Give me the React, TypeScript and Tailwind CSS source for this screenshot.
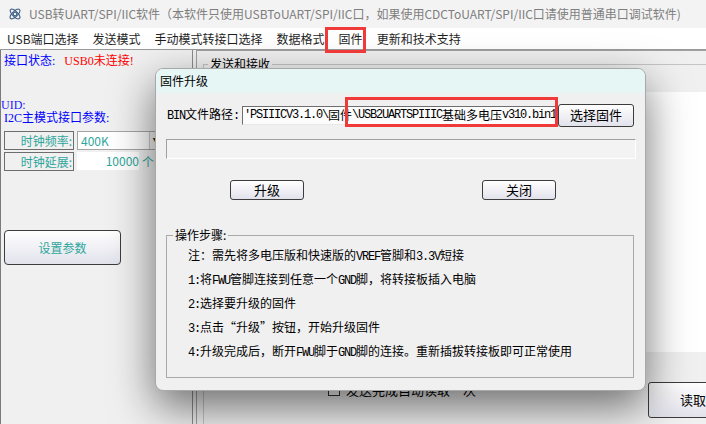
import React from "react";

const sans = "font-['Noto_Sans_CJK_SC',sans-serif]";
const teal = "text-[#2ea69b]";

// latin runs look like a narrow bitmap mono, CJK stays sans
function Mixed({ text }: { text: string }) {
  const parts = text.split(/([\x20-\x7e]+)/).filter(Boolean);
  return (
    <>
      {parts.map((p, i) =>
        /^[\x20-\x7e]+$/.test(p) ? (
          <span key={i} className="font-['Liberation_Mono',monospace] tracking-[-1.2px]">
            {p}
          </span>
        ) : (
          <span key={i}>{p}</span>
        )
      )}
    </>
  );
}

const AppIcon = () => (
  <svg width="14" height="14" viewBox="0 0 14 14" fill="none" stroke="#3f5f86" strokeWidth="1.1">
    <ellipse cx="7" cy="7" rx="6.3" ry="2.6" transform="rotate(45 7 7)" />
    <ellipse cx="7" cy="7" rx="6.3" ry="2.6" transform="rotate(-45 7 7)" />
    <circle cx="7" cy="7" r="1.8" />
  </svg>
);

const menu = ["USB端口选择", "发送模式", "手动模式转接口选择", "数据格式", "固件", "更新和技术支持"];

const steps = [
  "注：需先将多电压版和快速版的VREF管脚和3.3V短接",
  "1:将FWU管脚连接到任意一个GND脚，将转接板插入电脑",
  "2:选择要升级的固件",
  "3:点击“升级”按钮，开始升级固件",
  "4:升级完成后，断开FWU脚于GND脚的连接。重新插拔转接板即可正常使用",
];

const btn =
  "flex items-center justify-center border border-[#3c3c3c] rounded-[3px] bg-gradient-to-b from-white to-[#e2e2ec]";

const LeftPanel = () => (
  <div className={`w-[193px] shrink-0 h-full overflow-hidden border-l border-[#7a7a7a] border-r border-r-[#8c8c8c] bg-[#f0f0f0] ${sans}`}>
    <div className="pt-[2px] pl-[3px] h-[20px] flex items-center text-[12px] font-['Liberation_Serif','Noto_Sans_CJK_SC',serif] whitespace-nowrap">
      <span className="text-[#0000ff]">接口状态:</span>
      <span className="ml-[9px] text-[#ff0000]">USB0未连接!</span>
    </div>
    <div className="mt-[28px] h-[14px] leading-[14px] text-[12px] text-[#1a1aff] font-['Liberation_Serif',serif]">UID:</div>
    <div className="pl-[3px] h-[13px] leading-[13px] text-[12px] text-[#0000ff] font-['Liberation_Serif','Noto_Sans_CJK_SC',serif] whitespace-nowrap">
      I2C主模式接口参数:
    </div>
    <div className="mt-[6px] pl-[3px] flex gap-[3px] whitespace-nowrap">
      <div className={`w-[70px] shrink-0 h-[19px] border border-[#6d6d6d] flex items-center justify-end pr-[1px] text-[12px] ${teal}`}>
        时钟频率:
      </div>
      <div className="w-[86px] shrink-0 h-[19px] border border-[#a5a5a5] bg-white flex items-center">
        <span className={`flex-1 pl-[3px] text-[12px] ${teal}`}>400K</span>
        <span className="w-[13px] h-full border-l border-[#c8c8c8] bg-[#f2f2f2] flex items-center justify-center text-[7px] text-[#333]">
          ▼
        </span>
      </div>
    </div>
    <div className="mt-[2px] pl-[3px] flex gap-[3px] h-[19px] whitespace-nowrap">
      <div className={`w-[70px] shrink-0 h-[19px] border border-[#6d6d6d] flex items-center justify-end pr-[1px] text-[12px] ${teal}`}>
        时钟延展:
      </div>
      <div className={`w-[62px] shrink-0 h-[18px] bg-white flex items-center justify-end text-[12px] ${teal}`}>10000</div>
      <span className={`text-[12px] leading-[19px] ${teal}`}>个Bit</span>
    </div>
    <div className={`mt-[59px] ml-[3px] w-[117px] h-[35px] ${btn} rounded-[4px] text-[12px] ${teal}`}>设置参数</div>
  </div>
);

const RightPanel = () => (
  <div className={`flex-1 min-w-0 h-full overflow-hidden pl-[3px] bg-[#f0f0f0] ${sans}`}>
    <div className="h-full border-l border-t border-[#a0a0a0] pl-[6px]">
      <fieldset className="mt-[5px] w-[530px] h-[400px] border border-[#c4c4c4]">
        <legend className="ml-[4px] px-[2px] text-[12px] leading-[16px] text-black">发送和接收</legend>
        <div className="mt-[20px] ml-[6px] h-[260px] bg-white" />
        <div className="mt-[30px] flex items-start">
          <div className="w-[444px] shrink-0 pl-[124px] flex items-center gap-[6px]">
            <span className="w-[12px] h-[12px] border border-[#333] bg-white" />
            <span className="text-[13px] leading-[16px] text-black whitespace-nowrap">发送完成自动读取一次</span>
          </div>
          <div className={`w-[90px] shrink-0 h-[36px] ${btn} text-[13px] text-black`}>读取</div>
        </div>
      </fieldset>
    </div>
  </div>
);

const Dialog = () => (
  <div className="absolute left-[155px] top-[68px] w-[491px] h-[323px] rounded-[8px] border border-[#a8a8a8] bg-[#f0f0f0] shadow-[0_16px_44px_rgba(0,0,0,0.55)] overflow-hidden flex flex-col">
    <div className={`h-[24px] bg-[#e6f6f5] flex items-center pl-[4px] text-[12px] text-black ${sans}`}>固件升级</div>
    <div className={`pl-[10px] text-[12px] text-black ${sans}`}>
      <div className="mt-[10px] h-[24px] flex items-center">
        <span className="w-[76px] pl-[1px] whitespace-nowrap">
          <Mixed text="BIN文件路径:" />
        </span>
        <div className="w-[314px] h-[19px] border-t border-l border-[#6e6e6e] border-b border-r border-b-[#e8e8e8] border-r-[#e8e8e8] bg-[#fcfcfc] overflow-hidden whitespace-nowrap flex items-center pl-[1px]">
          <Mixed text="'PSIIICV3.1.0\固件\USB2UARTSPIIIC基础多电压v310.bin1" />
        </div>
        <div className={`ml-[2px] w-[76px] h-[23px] ${btn} text-[13px]`}>选择固件</div>
      </div>
      <div className="mt-[12px] w-[470px] h-[20px] border-t border-l border-[#a0a0a0] border-b border-r border-b-white border-r-white bg-[#f3f3f3]" />
      <div className="mt-[21px] h-[20px] flex">
        <div className={`ml-[64px] w-[74px] h-[20px] ${btn} text-[13px]`}>升级</div>
        <div className={`ml-[178px] w-[74px] h-[20px] ${btn} text-[13px]`}>关闭</div>
      </div>
      <fieldset className="mt-[27px] w-[468px] h-[151px] border border-[#a9a9a9]">
        <legend className="ml-[6px] px-[2px] text-[12px] leading-[16px]">操作步骤:</legend>
        <div className="pl-[21px]">
          {steps.map((s) => (
            <div key={s} className="h-[24px] leading-[24px] whitespace-nowrap">
              <Mixed text={s} />
            </div>
          ))}
        </div>
      </fieldset>
    </div>
  </div>
);

export default function App() {
  return (
    <div className="relative w-[706px] h-[424px] overflow-hidden bg-[#f0f0f0] flex flex-col">
      <div className={`h-[28px] shrink-0 flex items-center bg-[#f3f3f3] pl-[8px] ${sans}`}>
        <AppIcon />
        <span className="ml-[7px] text-[12px] text-[#7e7e7e] whitespace-nowrap">
          USB转UART/SPI/IIC软件（本软件只使用USBToUART/SPI/IIC口，如果使用CDCToUART/SPI/IIC口请使用普通串口调试软件)
        </span>
      </div>
      <div className={`h-[22px] shrink-0 flex items-center bg-white border-b border-[#9a9a9a] ${sans}`}>
        {menu.map((m) => (
          <span key={m} className="px-[7px] text-[12px] text-[#1e1e1e] whitespace-nowrap">
            {m}
          </span>
        ))}
      </div>
      <div className="flex-1 flex min-h-0">
        <LeftPanel />
        <RightPanel />
      </div>

      <Dialog />

      {/* red annotation boxes */}
      <div className="absolute left-[325px] top-[27px] w-[41px] h-[26px] border-[3px] border-[#f03a3a]" />
      <div className="absolute left-[345px] top-[97px] w-[213px] h-[30px] border-[3px] border-[#f03a3a]" />
    </div>
  );
}
